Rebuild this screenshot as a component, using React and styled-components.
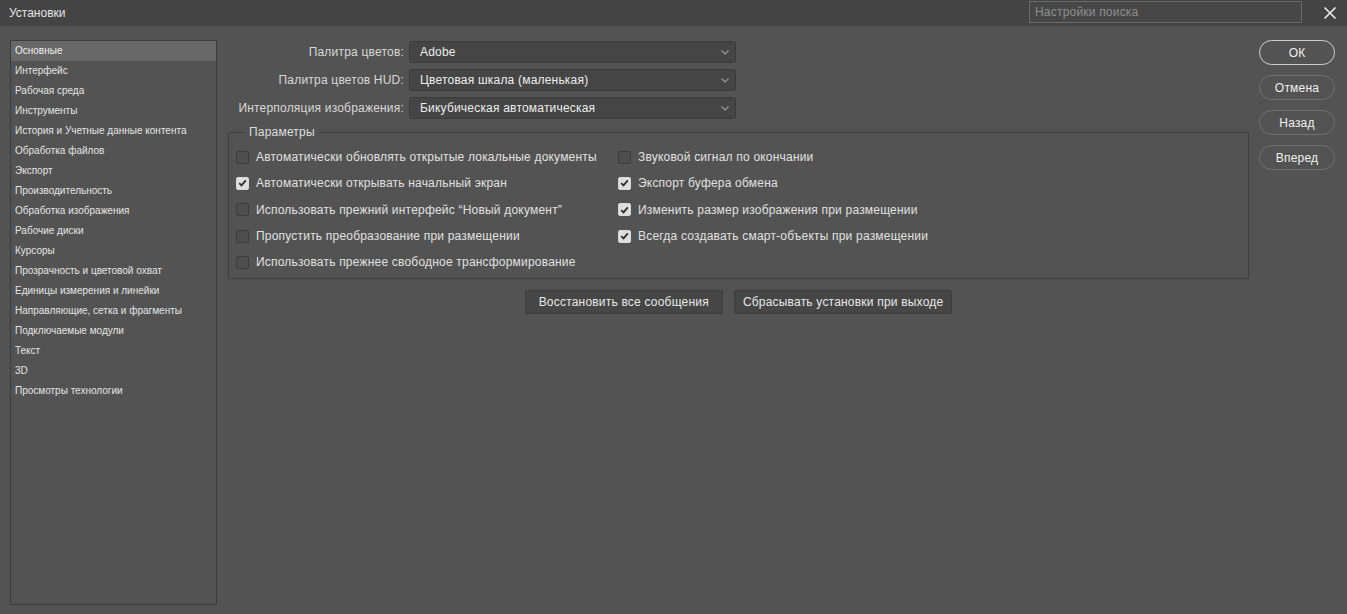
import React from 'react'
import styled, { createGlobalStyle } from 'styled-components'

const GlobalStyle = createGlobalStyle`
  html, body {
    margin: 0;
    padding: 0;
    background: #535353;
    font-family: "Liberation Sans", Arial, sans-serif;
    color: #dcdcdc;
  }
`

const Window = styled.div`
  width: 1347px;
  height: 614px;
  background: #535353;
  display: flex;
  flex-direction: column;
  overflow: hidden;
`

const TitleBar = styled.div`
  height: 26px;
  background: #444444;
  display: flex;
  align-items: center;
  padding: 0 10px 0 9px;
  font-size: 12px;
  color: #e2e2e2;
`

const Title = styled.div`
  flex: 1;
`

const Search = styled.div`
  width: 266px;
  height: 20px;
  border: 1px solid #6a6a6a;
  background: #474747;
  color: #8e8e8e;
  font-size: 12px;
  letter-spacing: 0.2px;
  display: flex;
  align-items: center;
  padding-left: 5px;
  margin-right: 21px;
  margin-top: -2px;
`

const Close = styled.svg`
  width: 14px;
  height: 14px;
  display: block;
`

const Body = styled.div`
  flex: 1;
  display: flex;
  padding: 14px 0 9px 10px;
`

const Sidebar = styled.ul`
  list-style: none;
  margin: 0;
  padding: 0;
  width: 205px;
  border: 1px solid #3d3d3d;
`

const NavItem = styled.li`
  height: 20px;
  line-height: 20px;
  padding-left: 4px;
  font-size: 10px;
  color: ${p => (p.$active ? '#f0f0f0' : '#e4e4e4')};
  background: ${p => (p.$active ? '#686868' : 'transparent')};
`

const Main = styled.div`
  width: 1021px;
  margin-left: 11px;
  display: flex;
  flex-direction: column;
  font-size: 12px;
  letter-spacing: 0.2px;
`

const Fields = styled.div`
  display: flex;
  flex-direction: column;
  gap: 6px;
  padding-top: 1px;
`

const FieldRow = styled.div`
  display: flex;
  align-items: center;
`

const FieldLabel = styled.div`
  width: 176px;
  text-align: right;
  white-space: nowrap;
  color: #d8d8d8;
  padding-right: 5px;
`

const Select = styled.div`
  width: 309px;
  height: 20px;
  border: 1px solid #3a3a3a;
  border-radius: 3px;
  background: #454545;
  display: flex;
  align-items: center;
  justify-content: space-between;
  padding: 0 6px 0 10px;
  color: #ececec;
`

const Chevron = styled.svg`
  width: 8px;
  height: 5px;
  display: block;
`

const Group = styled.fieldset`
  margin: 6px 0 0 0;
  padding: 5px 0 3px 7px;
  border: 1px solid #3e3e3e;
  border-radius: 1px;
`

const Legend = styled.legend`
  margin-left: 9px;
  padding: 0 4px;
  color: #dedede;
`

const Options = styled.div`
  display: grid;
  grid-template-columns: 382px 1fr;
  grid-auto-flow: column;
  grid-template-rows: repeat(5, 26.3px);
`

const Option = styled.label`
  display: flex;
  align-items: center;
  gap: 7px;
  color: #e0e0e0;
  white-space: nowrap;
`

const Box = styled.span`
  width: 11px;
  height: 11px;
  border-radius: 2px;
  border: 1px solid ${p => (p.$checked ? '#d8d8d8' : '#3c3c3c')};
  background: ${p => (p.$checked ? '#dedede' : '#4e4e4e')};
  display: flex;
  align-items: center;
  justify-content: center;
  flex-shrink: 0;
`

const Actions = styled.div`
  display: flex;
  justify-content: center;
  gap: 11px;
  margin-top: 11px;
`

const FlatButton = styled.div`
  height: 22px;
  border: 1px solid #3c3c3c;
  border-radius: 2px;
  background: #464646;
  color: #e6e6e6;
  display: flex;
  align-items: center;
  padding: 0 ${p => p.$pad}px;
`

const Side = styled.div`
  margin-left: 10px;
  display: flex;
  flex-direction: column;
  gap: 10px;
`

const Pill = styled.div`
  width: 74px;
  height: 23px;
  border-radius: 13px;
  border: 1px solid ${p => (p.$primary ? '#cfcfcf' : '#707070')};
  display: flex;
  align-items: center;
  justify-content: center;
  font-size: 12px;
  letter-spacing: 0.2px;
  color: #f0f0f0;
`

const nav = [
  'Основные',
  'Интерфейс',
  'Рабочая среда',
  'Инструменты',
  'История и Учетные данные контента',
  'Обработка файлов',
  'Экспорт',
  'Производительность',
  'Обработка изображения',
  'Рабочие диски',
  'Курсоры',
  'Прозрачность и цветовой охват',
  'Единицы измерения и линейки',
  'Направляющие, сетка и фрагменты',
  'Подключаемые модули',
  'Текст',
  '3D',
  'Просмотры технологии',
]

const fields = [
  ['Палитра цветов:', 'Adobe'],
  ['Палитра цветов HUD:', 'Цветовая шкала (маленькая)'],
  ['Интерполяция изображения:', 'Бикубическая автоматическая'],
]

const options = [
  ['Автоматически обновлять открытые локальные документы', false],
  ['Автоматически открывать начальный экран', true],
  ['Использовать прежний интерфейс “Новый документ”', false],
  ['Пропустить преобразование при размещении', false],
  ['Использовать прежнее свободное трансформирование', false],
  ['Звуковой сигнал по окончании', false],
  ['Экспорт буфера обмена', true],
  ['Изменить размер изображения при размещении', true],
  ['Всегда создавать смарт-объекты при размещении', true],
]

const Check = () => (
  <svg width="9" height="8" viewBox="0 0 9 8">
    <path d="M1.2 4.2 L3.5 6.4 L7.8 1.4" fill="none" stroke="#2e2e2e" strokeWidth="1.8" />
  </svg>
)

export default function App() {
  return (
    <Window>
      <GlobalStyle />
      <TitleBar>
        <Title>Установки</Title>
        <Search>Настройки поиска</Search>
        <Close viewBox="0 0 14 14">
          <path d="M1.5 1.5 L12.5 12.5 M12.5 1.5 L1.5 12.5" stroke="#e8e8e8" strokeWidth="1.7" />
        </Close>
      </TitleBar>
      <Body>
        <Sidebar>
          {nav.map((n, i) => (
            <NavItem key={n} $active={i === 0}>{n}</NavItem>
          ))}
        </Sidebar>
        <Main>
          <Fields>
            {fields.map(([label, value]) => (
              <FieldRow key={label}>
                <FieldLabel>{label}</FieldLabel>
                <Select>
                  {value}
                  <Chevron viewBox="0 0 8 5">
                    <path d="M0.5 0.5 L4 4 L7.5 0.5" fill="none" stroke="#9a9a9a" strokeWidth="1.2" />
                  </Chevron>
                </Select>
              </FieldRow>
            ))}
          </Fields>
          <Group>
            <Legend>Параметры</Legend>
            <Options>
              {options.map(([text, checked]) => (
                <Option key={text}>
                  <Box $checked={checked}>{checked && <Check />}</Box>
                  {text}
                </Option>
              ))}
            </Options>
          </Group>
          <Actions>
            <FlatButton $pad={13}>Восстановить все сообщения</FlatButton>
            <FlatButton $pad={8}>Сбрасывать установки при выходе</FlatButton>
          </Actions>
        </Main>
        <Side>
          <Pill $primary>ОК</Pill>
          <Pill>Отмена</Pill>
          <Pill>Назад</Pill>
          <Pill>Вперед</Pill>
        </Side>
      </Body>
    </Window>
  )
}
